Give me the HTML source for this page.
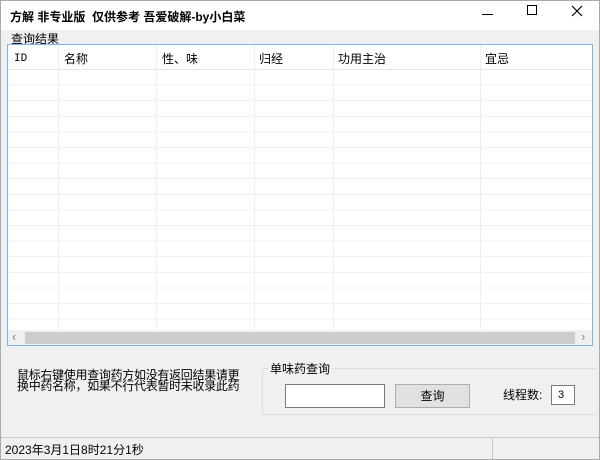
<!DOCTYPE html><html><head><meta charset="utf-8"><style>
*{margin:0;padding:0;box-sizing:border-box}
body{width:600px;height:460px;overflow:hidden;background:#f0f0f0;font-family:"Liberation Sans","Noto Sans CJK SC",sans-serif;font-size:12px;color:#000;position:relative}
.a{position:absolute}
</style></head><body>
<div class="a" style="left:0;top:0;width:600px;height:460px;border:1px solid #aaa"></div>
<div class="a" style="left:1px;top:1px;width:598px;height:29px;background:#fff"></div>
<div class="a" style="left:10px;top:8px;font-size:12px;font-weight:bold">方解 非专业版&nbsp; 仅供参考 吾爱破解-by小白菜</div>
<div class="a" style="left:482px;top:14px;width:11px;height:1px;background:#000"></div>
<div class="a" style="left:527px;top:5px;width:10px;height:10px;border:1px solid #000"></div>
<svg class="a" style="left:571px;top:5px" width="12" height="12"><path d="M1 1L11 11M11 1L1 11" stroke="#000" stroke-width="1.2"/></svg>
<div class="a" style="left:11px;top:30px;font-size:12px">查询结果</div>
<div class="a" style="left:7px;top:44px;width:586px;height:302px;border:1px solid #7eb4ea;background:#fff;overflow:hidden">
 <div class="a" style="left:0;top:0;width:584px;height:25px;border-bottom:1px solid #e5e5e5"></div>
 <div class="a" style="left:0;top:25px;width:584px;height:260px;background:repeating-linear-gradient(#fff 0,#fff 14.6px,#f0f0f0 14.6px,#f0f0f0 15.6px)"></div>
 <div class="a" style="left:50px;top:0;width:1px;height:285px;background:#eceef2"></div>
 <div class="a" style="left:148px;top:0;width:1px;height:285px;background:#eceef2"></div>
 <div class="a" style="left:246px;top:0;width:1px;height:285px;background:#eceef2"></div>
 <div class="a" style="left:325px;top:0;width:1px;height:285px;background:#eceef2"></div>
 <div class="a" style="left:472px;top:0;width:1px;height:285px;background:#eceef2"></div>
 <div class="a" style="left:6px;top:8px;font-family:'Liberation Mono',monospace;font-size:11px">ID</div>
 <div class="a" style="left:56px;top:5px">名称</div>
 <div class="a" style="left:154px;top:5px">性、味</div>
 <div class="a" style="left:251px;top:5px">归经</div>
 <div class="a" style="left:330px;top:5px">功用主治</div>
 <div class="a" style="left:477px;top:5px">宜忌</div>
 <div class="a" style="left:0;top:285px;width:584px;height:15px;background:#f0f0f0"></div>
 <div class="a" style="left:17px;top:287px;width:550px;height:12px;background:#cdcdcd"></div>
 <div class="a" style="left:4px;top:284px;color:#888;font-size:13px">‹</div>
 <div class="a" style="left:573px;top:284px;color:#888;font-size:13px">›</div>
</div>
<div class="a" style="left:17px;top:370px;line-height:11px;font-size:12px;letter-spacing:-0.3px">鼠标右键使用查询药方如没有返回结果请更<br>换中药名称，如果不行代表暂时未收录此药</div>
<div class="a" style="left:262px;top:368px;width:335px;height:47px;border:1px solid #dcdcdc;border-right:none"></div>
<div class="a" style="left:268px;top:360px;background:#f0f0f0;padding:0 2px">单味药查询</div>
<div class="a" style="left:285px;top:384px;width:100px;height:24px;background:#fff;border:1px solid #7a7a7a"></div>
<div class="a" style="left:395px;top:384px;width:75px;height:24px;border:1px solid #adadad;background:#e1e1e1;text-align:center;line-height:22px">查询</div>
<div class="a" style="left:503px;top:386px">线程数:</div>
<div class="a" style="left:551px;top:385px;width:24px;height:20px;background:#fff;border:1px solid #7a7a7a;font-size:11px;padding:3px 0 0 6px">3</div>
<div class="a" style="left:1px;top:437px;width:598px;height:1px;background:#c8c8c8"></div>
<div class="a" style="left:492px;top:438px;width:1px;height:21px;background:#c8c8c8"></div>
<div class="a" style="left:5px;top:441px">2023年3月1日8时21分1秒</div>
</body></html>
